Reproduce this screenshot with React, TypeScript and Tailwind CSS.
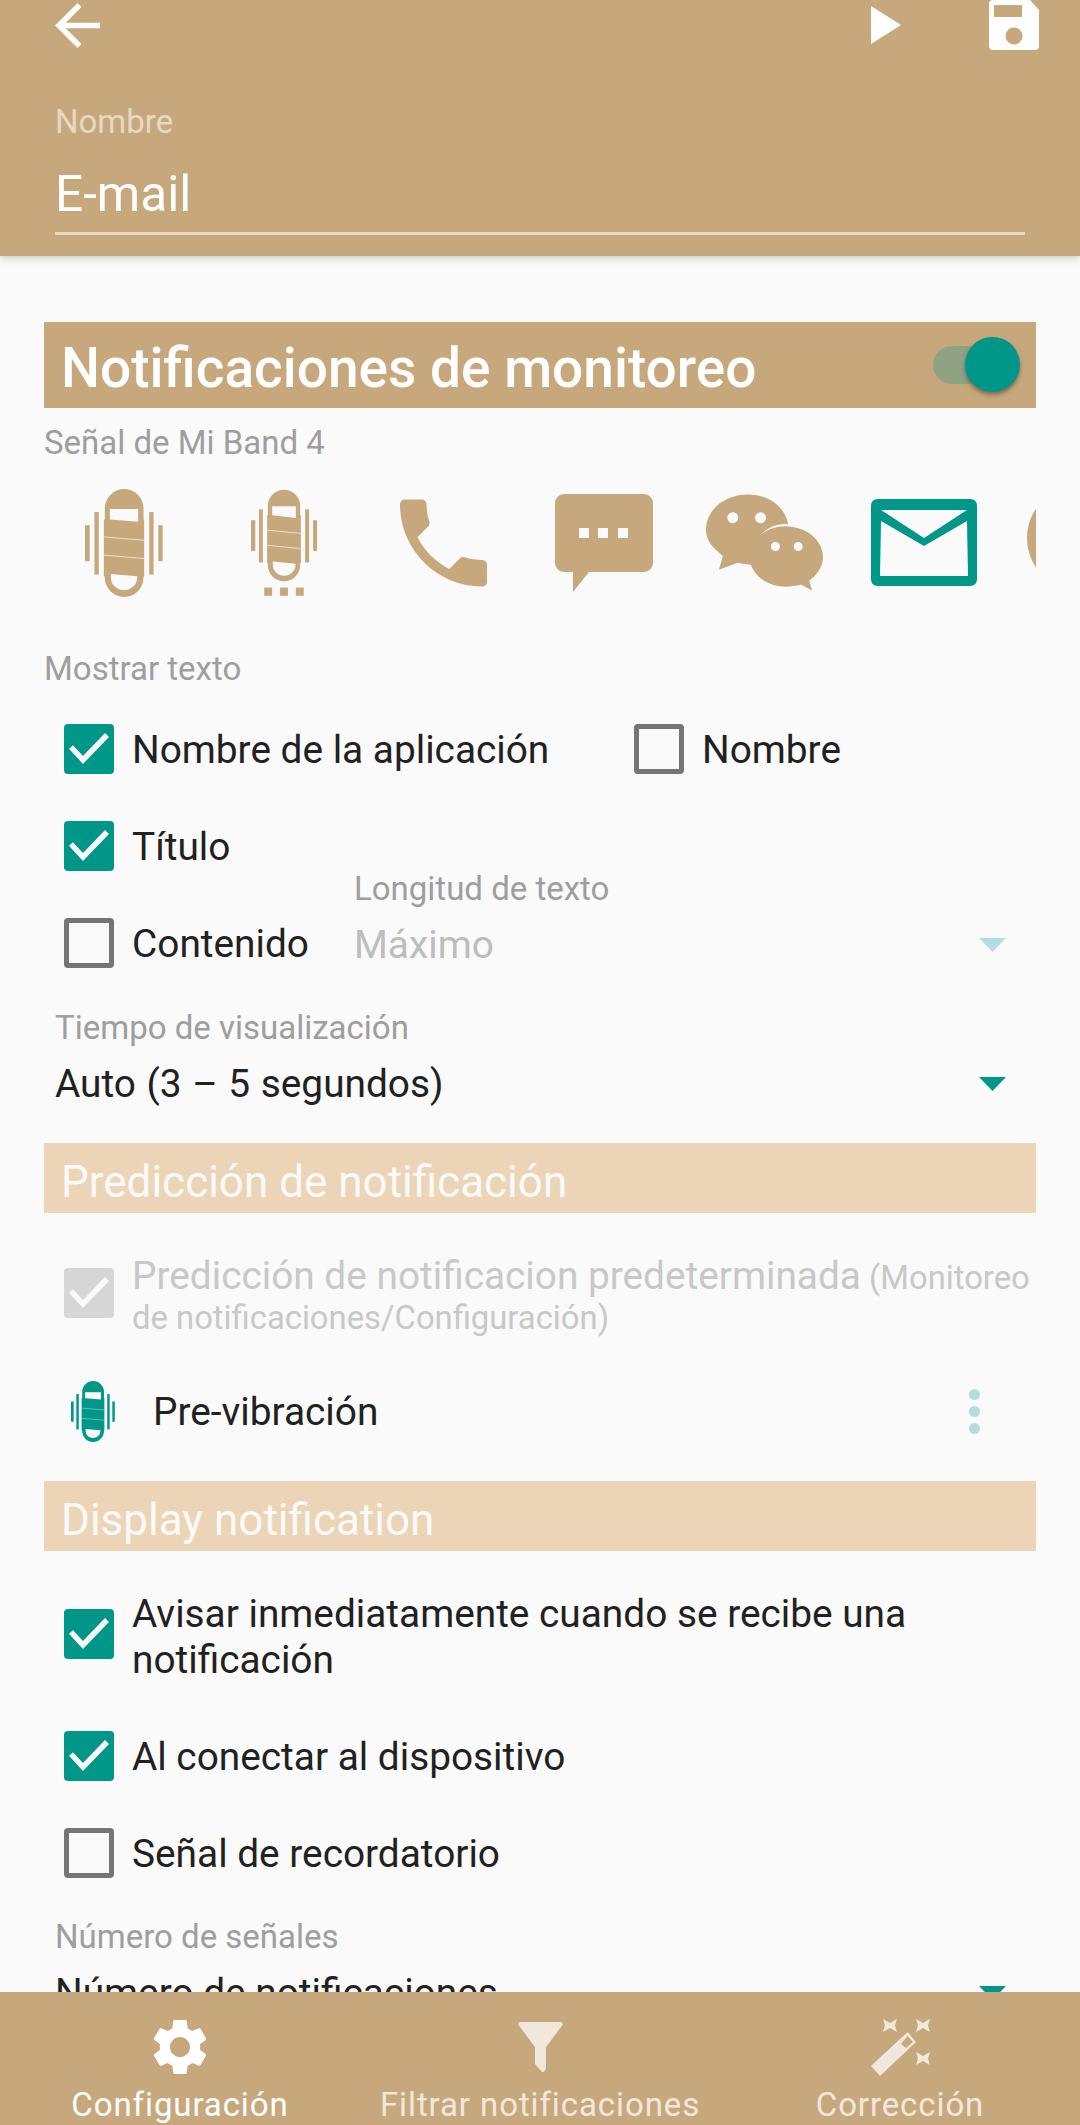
import type { ReactNode } from 'react';

const TAN = '#c7a87d';
const BG = '#fafafa';

function BandIcon({ color = TAN, className = '' }: { color?: string; className?: string }) {
    return (
        <svg viewBox="136 58 232 320" className={className} fill={color}>
            <rect x="136" y="165" width="14" height="107" />
            <rect x="164" y="126" width="13" height="186" />
            <rect x="327" y="126" width="13" height="186" />
            <rect x="354" y="165" width="13" height="107" />
            <path d="M195 115a57.500 57.500 0 0 1 115 0v206a57.500 57.500 0 0 1-115 0z" />
            <rect x="192" y="148" width="120" height="170" />
            <path d="M210 117h84v38l-84-7z" fill={BG} />
            <path d="M213 310l78 7v4a39 37 0 0 1-78 0z" fill={BG} />
            <path d="M192 200l120 10M192 254l120 10" stroke={BG} strokeWidth="2" />
        </svg>
    );
}

function SmallBand() {
    return (
        <svg viewBox="632 58 200 322" className="h-[108px] w-[66px]" fill={TAN}>
            <rect x="632" y="150" width="13" height="93" />
            <rect x="656" y="117" width="12" height="161" />
            <rect x="796" y="117" width="12" height="161" />
            <rect x="820" y="150" width="12" height="93" />
            <path d="M683 107a49 49 0 0 1 98 0v179a49 49 0 0 1-98 0z" />
            <rect x="681" y="135" width="102" height="145" />
            <path d="M696 108h72v35l-72-8z" fill={BG} />
            <path d="M698 275l69 7v2a34.500 34 0 0 1-69 0z" fill={BG} />
            <path d="M681 180l102 10M681 226l102 10" stroke={BG} strokeWidth="2" />
            <rect x="672" y="354" width="24" height="25" />
            <rect x="720" y="354" width="24" height="25" />
            <rect x="768" y="354" width="24" height="25" />
        </svg>
    );
}

function Tick() {
    return (
        <svg viewBox="0 0 50 50" className="h-[50px] w-[50px]" fill="none" stroke={BG} strokeWidth="5.500">
            <path d="M7 23l12 13 24-25" />
        </svg>
    );
}

function Box({ on = false, off = false }: { on?: boolean; off?: boolean }) {
    if (off) {
        return (
            <span className="block h-[50px] w-[50px] shrink-0 rounded-[4px] bg-[#d6d6d6]">
                <Tick />
            </span>
        );
    }
    if (on) {
        return (
            <span className="block h-[50px] w-[50px] shrink-0 rounded-[4px] bg-[#009688]">
                <Tick />
            </span>
        );
    }
    return <span className="block h-[50px] w-[50px] shrink-0 rounded-[4px] border-[5px] border-[#757575]" />;
}

function CheckRow({ on = false, label, className = '' }: { on?: boolean; label: string; className?: string }) {
    return (
        <div className={`flex h-[50px] items-center gap-[18px] text-[38.8px] text-[#212121] ${className}`}>
            <Box on={on} />
            <span className="whitespace-nowrap pt-[3px]">{label}</span>
        </div>
    );
}

function SectionBar({ children }: { children: string }) {
    return (
        <div className="flex h-[70px] items-center bg-[#ecd5b6] pl-[17px] pt-[7px] text-[44px] text-[#fafafa]">{children}</div>
    );
}

function Caret({ light = false }: { light?: boolean }) {
    return (
        <svg viewBox="0 0 27 14" className="h-[14px] w-[27px]" fill={light ? '#b2dfdb' : '#009688'}>
            <path d="M0 0h27L13.500 14z" />
        </svg>
    );
}

function NavItem({ icon, label, active = false }: { icon: ReactNode; label: string; active?: boolean }) {
    return (
        <div className={`flex w-[360px] flex-col items-center ${active ? 'text-white' : 'text-[#f0e8dc]'}`}>
            <div className="flex h-[60px] items-center justify-center">{icon}</div>
            <span className="mt-[9px] whitespace-nowrap text-[33px] leading-[40px] tracking-[0.9px]">{label}</span>
        </div>
    );
}

export default function App() {
    return (
        <div className="relative h-[2125px] w-[1080px] overflow-hidden bg-[#fafafa] font-['Roboto',sans-serif]">
            <header className="h-[256px] bg-[#c7a87d] px-[55px] shadow-[0_2px_8px_rgba(0,0,0,0.2)]">
                <div className="flex h-[50px] items-center">
                    <svg viewBox="4 4 16 16" className="h-[45px] w-[45px]" fill="#fff">
                        <path d="M20 11H7.830l5.590-5.590L12 4l-8 8 8 8 1.410-1.410L7.830 13H20v-2z" />
                    </svg>
                    <svg viewBox="0 0 30 38" className="ml-auto h-[38px] w-[30px]" fill="#fff">
                        <path d="M0 0l30 19L0 38z" />
                    </svg>
                    <svg viewBox="0 0 50 50" className="ml-[88px] -mr-[14px] h-[50px] w-[50px]" fill="#fff">
                        <path
                            fillRule="evenodd"
                            d="M4 0h37l9 10v36a4 4 0 0 1-4 4H4a4 4 0 0 1-4-4V4a4 4 0 0 1 4-4zM5 5v12h28V5zM25 27.500a8.500 8.500 0 1 0 0 17 8.500 8.500 0 0 0 0-17z"
                        />
                    </svg>
                </div>
                <div className="mt-[54px] text-[33px] leading-[36px] text-[#e6d8c3]">Nombre</div>
                <div className="mt-[26px] text-[49.5px] leading-[56px] text-white">E-mail</div>
                <div className="mt-[10px] h-[3px] w-[970px] bg-[#e6d8c3]" />
            </header>

            <main className="px-[44px] pt-[66px]">
                <div className="flex h-[86px] items-center justify-between bg-[#c7a87d] pl-[17px] pr-[16px]">
                    <span className="pt-[6px] text-[55px] font-medium leading-[64px] text-white">Notificaciones de monitoreo</span>
                    <div className="relative h-[38px] w-[87px]">
                        <div className="h-[38px] w-[60px] rounded-full bg-[#8fa382]" />
                        <div className="absolute -top-[9px] right-0 h-[55px] w-[55px] rounded-full bg-[#009688] shadow-[0_3px_4px_rgba(0,0,0,0.35)]" />
                    </div>
                </div>

                <div className="mt-[17px] text-[33px] leading-[36px] text-[#9e9e9e]">Señal de Mi Band 4</div>

                <div className="relative mt-[28px] flex h-[112px] items-start overflow-hidden">
                    <BandIcon className="ml-[41px] h-[108px] w-[78px] shrink-0" />
                    <div className="ml-[88px] shrink-0">
                        <SmallBand />
                    </div>
                    <svg viewBox="3 3 18 18" className="ml-[83px] mt-[10px] h-[88px] w-[87px] shrink-0" fill={TAN}>
                        <path d="M6.620 10.790c1.440 2.830 3.760 5.140 6.590 6.590l2.200-2.200c.27-.27.67-.36 1.020-.24 1.120.37 2.330.57 3.570.57.55 0 1 .45 1 1V20c0 .55-.45 1-1 1-9.390 0-17-7.610-17-17 0-.55.45-1 1-1h3.500c.55 0 1 .45 1 1 0 1.250.2 2.450.57 3.570.11.35.03.74-.25 1.020l-2.200 2.200z" />
                    </svg>
                    <svg viewBox="0 0 98 98" className="ml-[68px] mt-[5px] h-[98px] w-[98px] shrink-0" fill={TAN}>
                        <path
                            fillRule="evenodd"
                            d="M9 0h80a9 9 0 0 1 9 9v60a9 9 0 0 1-9 9H34L18 98V78H9a9 9 0 0 1-9-9V9a9 9 0 0 1 9-9zM24 34v10h10V34zM43 34v10h10V34zM63 34v10h10V34z"
                        />
                    </svg>
                    <svg viewBox="0 0 118 98" className="ml-[53px] mt-[5px] h-[98px] w-[117px] shrink-0" fill={TAN}>
                        <path
                            fillRule="evenodd"
                            d="M42 0c20 0 37 11 41 30-21-2-39 15-35 41-7 0-12-1-16-2L13 76l4-14C7 54 0 47 0 36 0 15 19 0 42 0zM27 18a5.500 5.500 0 1 0 0 11 5.500 5.500 0 0 0 0-11zM55 18a5.500 5.500 0 1 0 0 11 5.500 5.500 0 0 0 0-11z"
                        />
                        <path
                            fillRule="evenodd"
                            d="M80 32c21 0 38 14 38 31 0 10-6 18-14 24l3 10-11-6c-5 1-10 2-16 2-20 0-36-14-36-30 0-17 16-31 36-31zM70 48a4.500 4.500 0 1 0 0 9 4.500 4.500 0 0 0 0-9zM93 48a4.500 4.500 0 1 0 0 9 4.500 4.500 0 0 0 0-9z"
                        />
                    </svg>
                    <svg viewBox="0 0 106 87" className="ml-[48px] mt-[10px] h-[87px] w-[106px] shrink-0" fill="#009688">
                        <path
                            fillRule="evenodd"
                            d="M7 0h92q7 0 7 7v73q0 7-7 7H7q-7 0-7-7V7q0-7 7-7zM10 11l43 28 43-28zM10 22L9 77h88l-1-55-43 25z"
                        />
                    </svg>
                    <div className="ml-[50px] mt-[-4px] h-[106px] w-[106px] shrink-0 rounded-full bg-[#c7a87d]" />
                </div>

                <div className="mt-[50px] text-[33px] leading-[36px] text-[#9e9e9e]">Mostrar texto</div>

                <div className="mt-[37px] pl-[20px]">
                    <div className="flex">
                        <CheckRow on label="Nombre de la aplicación" className="w-[570px]" />
                        <CheckRow label="Nombre" />
                    </div>
                    <CheckRow on label="Título" className="mt-[47px]" />
                    <div className="mt-[47px] flex">
                        <CheckRow label="Contenido" className="w-[290px]" />
                        <div className="-mt-[47px] flex-1">
                            <div className="text-[33px] leading-[36px] text-[#9e9e9e]">Longitud de texto</div>
                            <div className="mt-[17px] flex items-center justify-between pr-[30px] text-[38.8px] leading-[42px] text-[#bdbdbd]">
                                <span>Máximo</span>
                                <Caret light />
                            </div>
                        </div>
                    </div>
                </div>

                <div className="mt-[42px] px-[11px]">
                    <div className="text-[33px] leading-[36px] text-[#9e9e9e]">Tiempo de visualización</div>
                    <div className="mt-[17px] flex items-center justify-between pr-[19px] text-[38.8px] leading-[42px] text-[#212121]">
                        <span className="[word-spacing:1px]">Auto (3 – 5 segundos)</span>
                        <Caret />
                    </div>
                </div>

                <div className="mt-[38px]">
                    <SectionBar>Predicción de notificación</SectionBar>
                </div>

                <div className="mt-[41px] flex items-start gap-[18px] pl-[20px]">
                    <div className="mt-[14px]">
                        <Box off />
                    </div>
                    <div className="text-[32.8px] leading-[43px] whitespace-nowrap text-[#c8c8c8]">
                        <div className="h-[43px]">
                            <span className="text-[38.8px]">Predicción de notificacion predeterminada</span> (Monitoreo
                        </div>
                        <div>de notificaciones/Configuración)</div>
                    </div>
                </div>

                <div className="mt-[40px] flex h-[64px] items-center pl-[27px] pr-[56px]">
                    <BandIcon color="#009688" className="-mt-[2px] h-[61px] w-[44px]" />
                    <span className="ml-[38px] text-[38.8px] text-[#212121]">Pre-vibración</span>
                    <div className="ml-auto -mt-[2px] flex flex-col gap-[6px]">
                        <span className="h-[11px] w-[11px] rounded-full bg-[#b2dfdb]" />
                        <span className="h-[11px] w-[11px] rounded-full bg-[#b2dfdb]" />
                        <span className="h-[11px] w-[11px] rounded-full bg-[#b2dfdb]" />
                    </div>
                </div>

                <div className="mt-[37px]">
                    <SectionBar>Display notification</SectionBar>
                </div>

                <div className="mt-[39px] pl-[20px]">
                    <div className="flex items-start gap-[18px] text-[38.8px] leading-[46px] text-[#212121]">
                        <div className="mt-[19px]">
                            <Box on />
                        </div>
                        <span className="whitespace-nowrap pt-[1px]">
                            Avisar inmediatamente cuando se recibe una
                            <br />
                            notificación
                        </span>
                    </div>
                    <CheckRow on label="Al conectar al dispositivo" className="mt-[48px]" />
                    <CheckRow label="Señal de recordatorio" className="mt-[47px]" />
                </div>

                <div className="mt-[41px] px-[11px]">
                    <div className="text-[33px] leading-[36px] text-[#9e9e9e]">Número de señales</div>
                    <div className="mt-[17px] flex items-center justify-between pr-[19px] text-[38.8px] leading-[42px] text-[#212121]">
                        <span>Número de notificaciones</span>
                        <Caret />
                    </div>
                </div>
            </main>

            <nav className="absolute bottom-0 left-0 flex h-[133px] w-[1080px] bg-[#c7a87d] pt-[26px]">
                <NavItem
                    active
                    label="Configuración"
                    icon={
                        <svg viewBox="2.500 2 19 20" className="h-[56px] w-[54px]" fill="currentColor">
                            <path d="M19.140 12.940c.04-.3.06-.61.06-.94 0-.32-.02-.64-.07-.94l2.030-1.580c.18-.14.23-.41.12-.61l-1.920-3.320c-.12-.22-.37-.29-.59-.22l-2.390.96c-.5-.38-1.030-.7-1.620-.94l-.36-2.540c-.04-.24-.24-.41-.48-.41h-3.840c-.24 0-.43.17-.47.41l-.36 2.540c-.59.24-1.130.57-1.620.94l-2.390-.96c-.22-.08-.47 0-.59.22L2.740 8.870c-.12.21-.08.47.12.61l2.030 1.580c-.05.3-.09.63-.09.94s.02.64.07.94l-2.030 1.580c-.18.14-.23.41-.12.61l1.920 3.320c.12.22.37.29.59.22l2.390-.96c.5.38 1.030.7 1.620.94l.36 2.540c.05.24.24.41.48.41h3.840c.24 0 .44-.17.47-.41l.36-2.540c.59-.24 1.130-.56 1.620-.94l2.390.96c.22.08.47 0 .59-.22l1.920-3.320c.12-.22.07-.47-.12-.61l-2.010-1.580zM12 15.600c-1.980 0-3.600-1.620-3.600-3.600s1.620-3.600 3.600-3.600 3.600 1.620 3.600 3.600-1.620 3.600-3.600 3.600z" />
                        </svg>
                    }
                />
                <NavItem
                    label="Filtrar notificaciones"
                    icon={
                        <svg viewBox="0 0 45 50" className="h-[50px] w-[45px]" fill="currentColor">
                            <path d="M2 0h41q2 0 1.500 3L28 25v21l-2 4h-2l-7-8V25L.500 3Q0 0 2 0z" />
                        </svg>
                    }
                />
                <NavItem
                    label="Corrección"
                    icon={
                        <svg viewBox="0 0 59 57" className="h-[57px] w-[59px]" fill="currentColor">
                            <path fillRule="evenodd" d="M36.600 13l8.400 10-36 34-9-10zM36.600 17L30 25l5 4 7-6z" />
                            <path d="M12 0l7 4 7-4-2 6.500 2 6.500-7-4-7 4 2-6.500zM45 0l7 4 7-4-2 6.500 2 6.500-7-4-7 4 2-6.500zM45 33l7 4 7-4-2 6.500 2 6.500-7-4-7 4 2-6.500z" />
                        </svg>
                    }
                />
            </nav>
        </div>
    );
}
